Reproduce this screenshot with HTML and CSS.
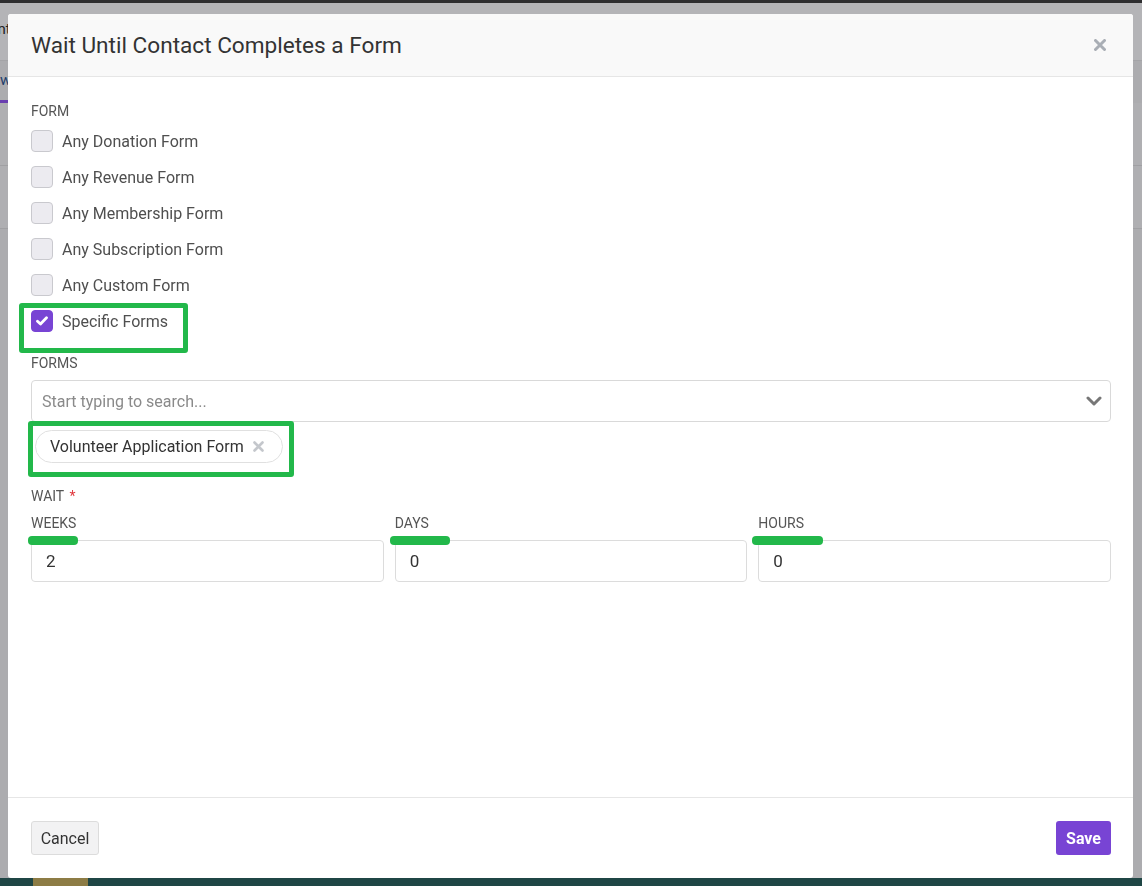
FILE: index.html
```html
<!DOCTYPE html>
<html lang="en">
<head>
    <meta charset="UTF-8">
    <meta name="viewport" content="width=device-width, initial-scale=1.0">
    <title>Wait Until Contact Completes a Form</title>
    <link rel="stylesheet" href="styles.css">
</head>
<body>
    <!-- page behind the dialog -->
    <div class="page">
        <div class="page-top"></div>
        <div class="page-header"><span class="page-title">Content</span></div>
        <div class="page-tabs"><span class="page-tab">w</span></div>
        <div class="page-row"></div>
        <div class="page-row"></div>
        <div class="page-fill"></div>
        <div class="page-footer"><span class="page-footer-chip"></span></div>
    </div>

    <div class="overlay">
        <div class="modal">
            <div class="modal-header">
                <h2>Wait Until Contact Completes a Form</h2>
                <button class="close-btn" type="button" aria-label="Close">
                    <svg width="12" height="12" viewBox="0 0 12 12"><path d="M1.5 1.5 L10.5 10.5 M10.5 1.5 L1.5 10.5" stroke="#a9aeb5" stroke-width="3" stroke-linecap="round"/></svg>
                </button>
            </div>

            <div class="modal-body">
                <div class="field-label">Form</div>
                <div class="check-list">
                    <label class="check-row"><span class="check-box"></span>Any Donation Form</label>
                    <label class="check-row"><span class="check-box"></span>Any Revenue Form</label>
                    <label class="check-row"><span class="check-box"></span>Any Membership Form</label>
                    <label class="check-row"><span class="check-box"></span>Any Subscription Form</label>
                    <label class="check-row"><span class="check-box"></span>Any Custom Form</label>
                    <label class="check-row check-row--marked">
                        <span class="check-box checked">
                            <svg width="12" height="10" viewBox="0 0 12 10"><path d="M1.5 5.2 L4.5 8 L10.5 1.8" fill="none" stroke="#fff" stroke-width="2.8" stroke-linecap="round" stroke-linejoin="round"/></svg>
                        </span>Specific Forms
                    </label>
                </div>

                <div class="field-label forms-label">Forms</div>
                <div class="search-select">
                    <span class="placeholder">Start typing to search...</span>
                    <svg width="16" height="10" viewBox="0 0 16 10"><path d="M2 2 L8 8 L14 2" fill="none" stroke="#777" stroke-width="3" stroke-linecap="round" stroke-linejoin="round"/></svg>
                </div>
                <div class="tags">
                    <span class="tag">Volunteer Application Form
                        <svg width="11" height="11" viewBox="0 0 11 11"><path d="M1.5 1.5 L9.5 9.5 M9.5 1.5 L1.5 9.5" stroke="#c4c7cc" stroke-width="2.6" stroke-linecap="round"/></svg>
                    </span>
                </div>

                <div class="field-label wait-label">Wait <span class="required">*</span></div>
                <div class="wait-grid">
                    <div class="wait-col">
                        <div class="field-label">Weeks</div>
                        <div class="num-input">2<span class="mark mark-weeks"></span></div>
                    </div>
                    <div class="wait-col">
                        <div class="field-label">Days</div>
                        <div class="num-input">0<span class="mark mark-days"></span></div>
                    </div>
                    <div class="wait-col">
                        <div class="field-label">Hours</div>
                        <div class="num-input">0<span class="mark mark-hours"></span></div>
                    </div>
                </div>
            </div>

            <div class="modal-footer">
                <button class="btn btn-cancel" type="button">Cancel</button>
                <button class="btn btn-save" type="button">Save</button>
            </div>
        </div>
    </div>
</body>
</html>
```

FILE: styles.css
```css
/* dialog: wait until contact completes a form */
*,
*::before,
*::after {
    box-sizing: border-box;
}

body {
    margin: 0;
    font-family: Roboto, "Liberation Sans", Arial, sans-serif;
    overflow: hidden;
    height: 886px;
}

/* dimmed page behind the dialog */
.page {
    height: 886px;
    display: flex;
    flex-direction: column;
    background-color: #acacaf;
}

.page-top {
    height: 3px;
    background-color: #2e2e30;
}

.page-header {
    height: 58px;
    background-color: #b4b4b7;
    border-bottom: 1px solid #a4a4a7;
    padding-top: 17px;
    font-size: 15px;
    color: #222;
    overflow: hidden;
}

.page-title {
    margin-left: -42px;
}

.page-tabs {
    height: 42px;
    border-bottom: 3px solid #6a3fb0;
    width: 8px;
    padding-top: 10px;
    font-size: 15px;
    color: #1d3c6b;
    overflow: hidden;
}

.page-row {
    height: 63px;
    border-bottom: 1px solid #a0a0a3;
    background-color: #afafb2;
}

.page-fill {
    flex: 1;
}

.page-footer {
    height: 8px;
    background-color: #1f4645;
    padding-left: 33px;
}

.page-footer-chip {
    display: block;
    width: 55px;
    height: 8px;
    background-color: #8d7c45;
}

.overlay {
    position: fixed;
    inset: 0;
    padding: 14px 9px 8px 8px;
    display: flex;
}

.modal {
    flex: 1;
    background-color: #fff;
    border-radius: 3px;
    display: flex;
    flex-direction: column;
    overflow: hidden;
}

.modal-header {
    height: 63px;
    background-color: #f9f9f9;
    border-bottom: 1px solid #e6e6e6;
    display: flex;
    align-items: center;
    justify-content: space-between;
    padding: 0 27px 0 23px;
}

.modal-header h2 {
    margin: 0;
    font-size: 22.6px;
    font-weight: 400;
    color: #333;
}

.close-btn {
    border: none;
    background: none;
    padding: 0;
    display: flex;
    cursor: pointer;
}

.modal-body {
    flex: 1;
    padding: 26px 22px 0 23px;
}

.field-label {
    font-size: 14px;
    line-height: 17px;
    text-transform: uppercase;
    color: #555;
}

.check-list {
    margin-top: 10px;
    display: flex;
    flex-direction: column;
    gap: 14px;
}

.check-row {
    display: flex;
    align-items: center;
    gap: 9px;
    height: 22px;
    font-size: 16px;
    color: #4f4f4f;
    position: relative;
}

.check-box {
    width: 22px;
    height: 22px;
    border: 1px solid #c9c9ce;
    border-radius: 4px;
    background-color: #ecebf0;
    display: flex;
    align-items: center;
    justify-content: center;
}

.check-box.checked {
    background-color: #7844d4;
    border-color: #7844d4;
}

/* highlight frames */
.check-row--marked::after {
    content: "";
    position: absolute;
    left: -12px;
    top: -7px;
    width: 169px;
    height: 50px;
    border: 5px solid #22b84a;
    border-radius: 3px;
}

.forms-label {
    margin-top: 23px;
}

.search-select {
    margin-top: 8px;
    height: 42px;
    border: 1px solid #d9d9d9;
    border-radius: 4px;
    display: flex;
    align-items: center;
    justify-content: space-between;
    padding: 0 8px 0 10px;
}

.placeholder {
    font-size: 16px;
    color: #8a8a8a;
}

.tags {
    margin-top: 8px;
    padding-left: 4px;
    display: flex;
}

.tag {
    position: relative;
    display: inline-flex;
    align-items: center;
    gap: 9px;
    height: 33px;
    padding: 0 18px 0 14px;
    border: 1px solid #e0e0e0;
    border-radius: 17px;
    font-size: 16px;
    color: #333;
}

.tag::after {
    content: "";
    position: absolute;
    left: -8px;
    top: -10px;
    width: 266px;
    height: 56px;
    border: 5px solid #22b84a;
    border-radius: 3px;
}

.wait-label {
    margin-top: 25px;
}

.required {
    color: #e0393e;
    margin-left: 2px;
}

.wait-grid {
    margin-top: 10px;
    display: grid;
    grid-template-columns: 1fr 1fr 1fr;
    gap: 11px;
}

.wait-col .field-label {
    margin-bottom: 8px;
}

.num-input {
    position: relative;
    height: 42px;
    border: 1px solid #dcdcdc;
    border-radius: 4px;
    padding: 0 14px;
    display: flex;
    align-items: center;
    font-size: 17px;
    color: #333;
}

.mark {
    position: absolute;
    top: -5px;
    height: 9px;
    border-radius: 4px;
    background-color: #22b84a;
}

.mark-weeks {
    left: -4px;
    width: 50px;
}

.mark-days {
    left: -6px;
    width: 60px;
}

.mark-hours {
    left: -7px;
    width: 71px;
}

.modal-footer {
    height: 81px;
    border-top: 1px solid #e6e6e6;
    display: flex;
    align-items: center;
    justify-content: space-between;
    padding: 0 22px 0 23px;
}

.btn {
    height: 34px;
    border-radius: 3px;
    font-family: inherit;
    font-size: 16px;
    cursor: pointer;
}

.btn-cancel {
    width: 68px;
    background-color: #f2f2f3;
    border: 1px solid #dcdcdc;
    color: #333;
}

.btn-save {
    width: 55px;
    background-color: #7844d4;
    border: none;
    color: #fff;
    font-weight: 700;
}
```
